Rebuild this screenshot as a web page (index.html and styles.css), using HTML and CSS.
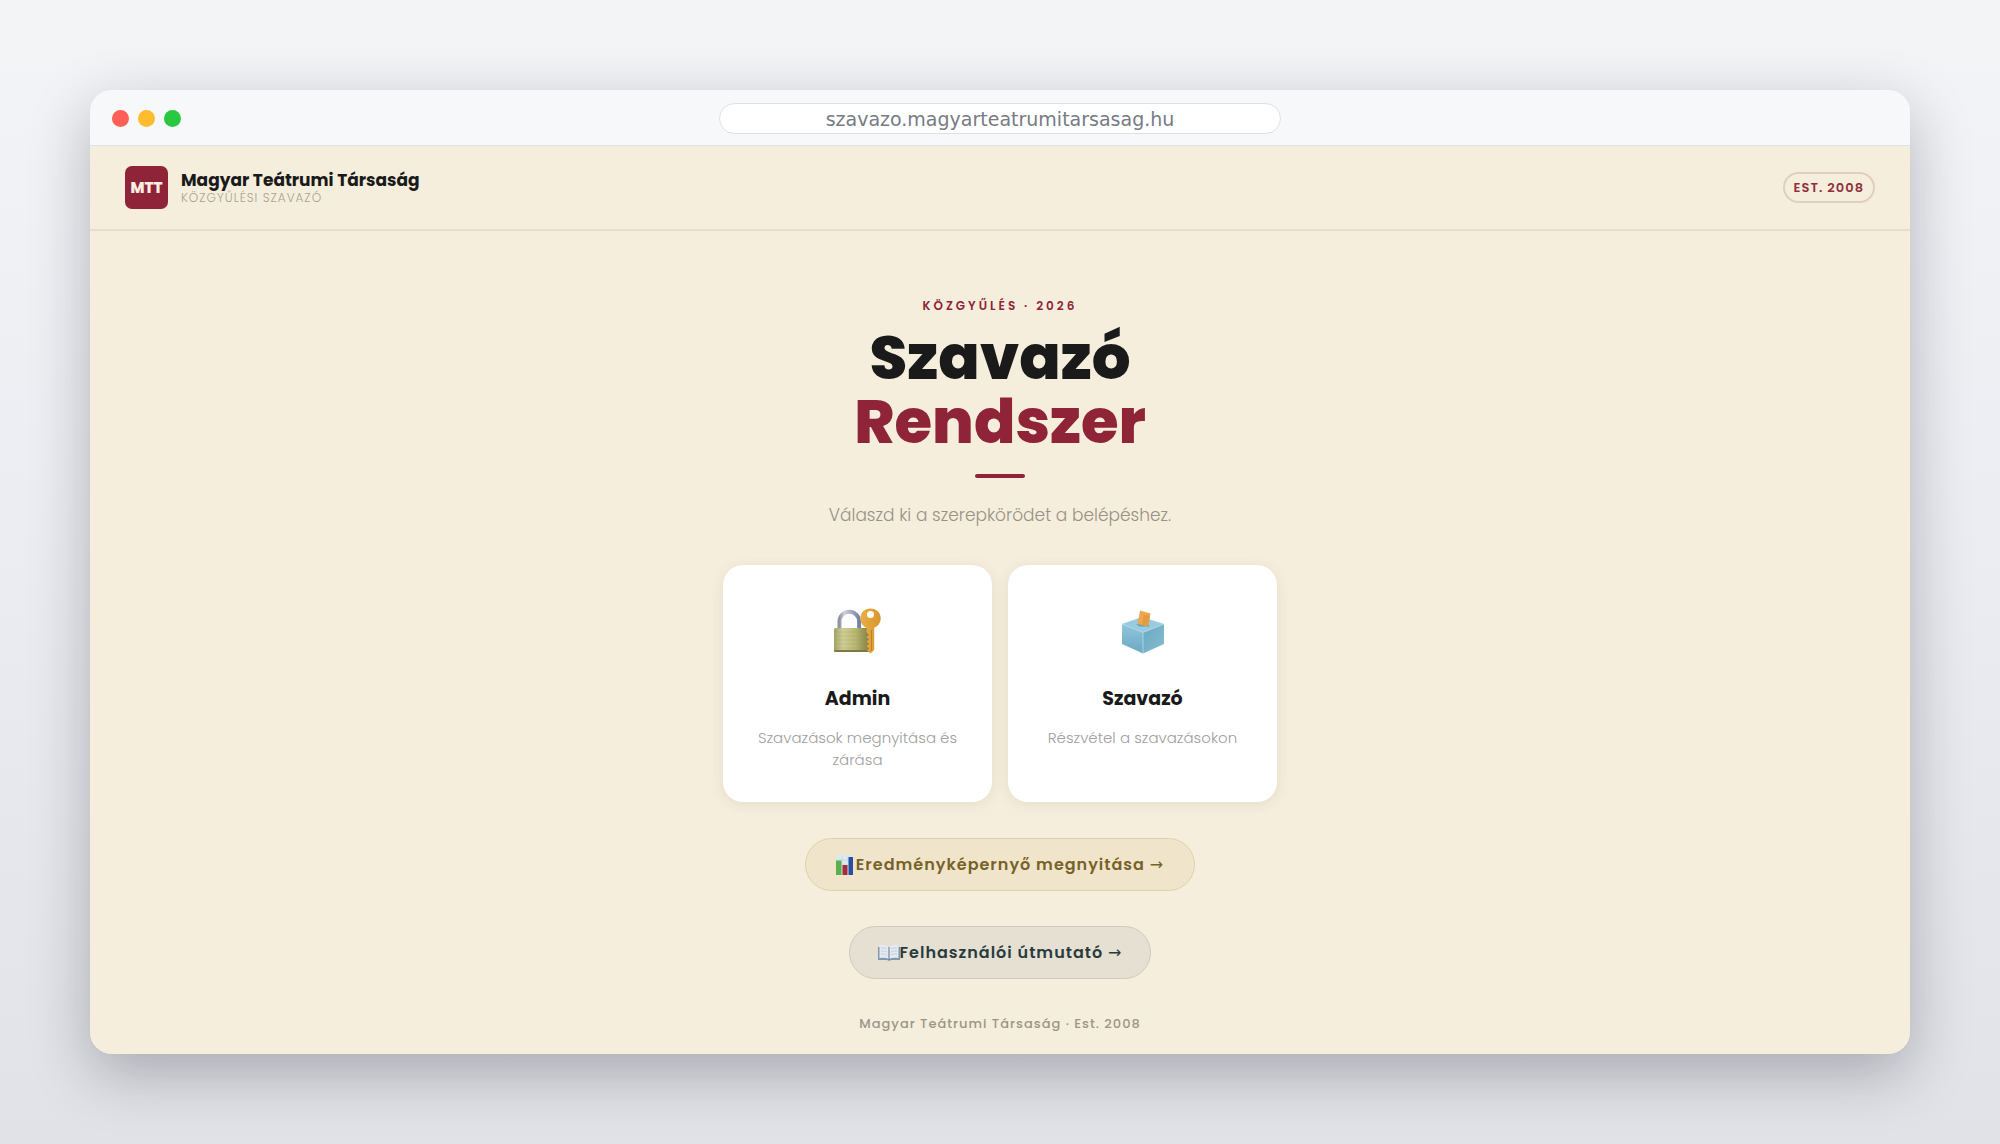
FILE: index.html
```html
<!DOCTYPE html>
<html lang="hu">
<head>
<meta charset="utf-8">
<meta name="viewport" content="width=device-width, initial-scale=1">
<title>Szavazó Rendszer</title>
<link rel="stylesheet" href="styles.css">
</head>
<body>
<div class="window">
  <div class="titlebar">
    <div class="lights"><span class="light light-red"></span><span class="light light-yellow"></span><span class="light light-green"></span></div>
    <input class="address" type="text" aria-label="Cím" value="szavazo.magyarteatrumitarsasag.hu" readonly>
  </div>
  <div class="page">
    <header class="header">
      <div class="brand">
        <span class="logo">MTT</span>
        <div>
          <div class="brand-name">Magyar Teátrumi Társaság</div>
          <div class="brand-sub">KÖZGYŰLÉSI SZAVAZÓ</div>
        </div>
      </div>
      <span class="badge">EST. 2008</span>
    </header>
    <main class="main">
      <p class="eyebrow">KÖZGYŰLÉS · 2026</p>
      <h1 class="title">Szavazó<br><span class="accent">Rendszer</span></h1>
      <div class="rule"></div>
      <p class="tagline">Válaszd ki a szerepkörödet a belépéshez.</p>
      <div class="cards">
        <a class="card" href="#admin">
          <svg class="card-icon" viewBox="0 0 48 48" aria-hidden="true">
            <defs>
              <linearGradient id="brass" x1="0" x2="1"><stop offset="0" stop-color="#a3a164"/><stop offset=".25" stop-color="#cfce97"/><stop offset=".6" stop-color="#b8b671"/><stop offset="1" stop-color="#7d7a40"/></linearGradient>
              <linearGradient id="steel" x1="0" x2="1"><stop offset="0" stop-color="#8f959f"/><stop offset=".25" stop-color="#cdd2dd"/><stop offset="1" stop-color="#7182a8"/></linearGradient>
              <linearGradient id="gold" x1="0" x2="1"><stop offset="0" stop-color="#eaae45"/><stop offset="1" stop-color="#d8962f"/></linearGradient>
            </defs>
            <path d="M5.500 22V14.500a9.800 9.800 0 0 1 19.600 0V22" fill="none" stroke="url(#steel)" stroke-width="4"/>
            <rect x="0" y="21" width="36" height="24" rx="1.500" fill="url(#brass)"/>
            <path d="M1 25h34M1 29h34M1 33h34M1 37h34M1 41h34" stroke="#9c9a50" stroke-width=".5" opacity=".5"/>
            <path d="M0 43h36v1q0 1-2 1H2q-2 0-2-1z" fill="#7c7b48"/>
            <path fill-rule="evenodd" d="M36.500 1.500c6 0 10.200 4.300 10.200 9.800 0 4.500-2.700 8-6.500 9.500V43L36.500 46.500 33 43.500l2-2-2.500-2.500 2.500-2-2.500-2.500 2.500-2-2.500-2.500 2.500-2-2.500-2.500V21c-3.500-1.700-6.200-5.200-6.200-9.700 0-5.500 4.200-9.800 10.200-9.800zm0 2.500a3.500 3.500 0 1 0 0 7 3.500 3.500 0 0 0 0-7z" fill="url(#gold)"/>
            <path d="M37.500 23v21" stroke="#c07f24" stroke-width="1"/>
          </svg>
          <h2 class="card-title">Admin</h2>
          <p class="card-text">Szavazások megnyitása és zárása</p>
        </a>
        <a class="card" href="#szavazo">
          <svg class="card-icon" viewBox="0 0 48 48" aria-hidden="true">
            <defs>
              <linearGradient id="boxl" x1="0" y1="0" x2="0" y2="1"><stop offset="0" stop-color="#8fc6dc"/><stop offset="1" stop-color="#6ba8c2"/></linearGradient>
              <linearGradient id="boxr" x1="0" y1="0" x2="1" y2="1"><stop offset="0" stop-color="#6aa8c2"/><stop offset="1" stop-color="#86bcd1"/></linearGradient>
            </defs>
            <path d="M3 17l21 8v21.500L3 37z" fill="url(#boxl)"/>
            <path d="M45 17l-21 8v21.500L45 37z" fill="url(#boxr)"/>
            <path d="M3 17l20-7 22 7-21 8.500z" fill="#98cbde"/>
            <path d="M3 17l21 8.500L45 17M24 26v20" fill="none" stroke="#b4dbe8" stroke-width=".8"/>
            <path d="M17 17l3.500 2.500h10l-1-2z" fill="#6f9fb1"/>
            <path d="M21 3.500l10.500 3-2.500 13L18.500 17z" fill="#eba650"/>
            <path d="M25 8l6 1-2 10-6-1.500z" fill="#e39a40"/>
          </svg>
          <h2 class="card-title">Szavazó</h2>
          <p class="card-text">Részvétel a szavazásokon</p>
        </a>
      </div>
      <a class="pill pill-gold" href="#eredmenyek">
        <svg class="pill-icon" viewBox="0 0 20 20" aria-hidden="true">
          <path d="M0 0h17v20H0z" fill="#dce9ee"/>
          <path d="M0 5h17M0 10h17M0 15h17M6 0v20M12 0v20" stroke="#c1d2dc" stroke-width=".6"/>
          <path d="M0 5.500h5.500V20H0z" fill="#5cb04c"/><path d="M6.500 10h5v10h-5z" fill="#a52b3e"/><path d="M12.500 2H17v18h-4.500z" fill="#2b4fa0"/>
        </svg><span>Eredményképernyő megnyitása <span class="arrow">→</span></span></a>
      <a class="pill pill-slate" href="#utmutato">
        <svg class="pill-icon pill-icon-wide" viewBox="0 0 22 20" aria-hidden="true">
          <path d="M0 4h22v13h-9l-2 1-2-1H0z" fill="#8397ad"/>
          <path d="M1.500 2Q7 1 11 4v12q-4-2-9.500-1zM20.500 2Q15 1 11 4v12q4-2 9.500-1z" fill="#e5eaf2"/>
          <path d="M11 4v13" stroke="#647083" stroke-width="1"/>
          <path d="M3 5q4-.5 6 1M3 8q4-.5 6 1M3 11q4-.5 6 1M19 5q-4-.5-6 1M19 8q-4-.5-6 1M19 11q-4-.5-6 1" fill="none" stroke="#bcc6d6" stroke-width=".8"/>
        </svg><span>Felhasználói útmutató <span class="arrow">→</span></span></a>
      <footer class="footer">Magyar Teátrumi Társaság · Est. 2008</footer>
    </main>
  </div>
</div>
</body>
</html>
```
FILE: styles.css
```css
* { box-sizing: border-box; }

body {
  margin: 0;
  min-height: 100vh;
  padding: 90px;
  background: linear-gradient(#f3f4f6, #eceef3 40%, #e1e2e7);
  font-family: Poppins, "Liberation Sans", sans-serif;
  color: #1a1a1a;
}

h1, h2, p { margin: 0; }
a { color: inherit; text-decoration: none; }

.window {
  border-radius: 22px;
  overflow: hidden;
  box-shadow: 0 20px 60px rgba(20, 20, 35, .28);
}

.titlebar {
  display: grid;
  grid-template-columns: 1fr 562px 1fr;
  align-items: center;
  height: 56px;
  padding: 2px 22px 0;
  background: #f7f8fa;
  border-bottom: 1px solid #dde0e4;
}
.lights { display: flex; gap: 9px; }
.light { width: 17px; height: 17px; border-radius: 50%; }
.light-red { background: #ff5f57; }
.light-yellow { background: #febc2e; }
.light-green { background: #28c840; }
.address {
  width: 100%;
  height: 31px;
  padding: 0 16px;
  border: 1px solid #dde0e4;
  border-radius: 16px;
  background: #fff;
  color: #777b83;
  font: 19px "DejaVu Sans", sans-serif;
  text-align: center;
}

.page { background: #f5eedc; }
.header {
  display: flex;
  justify-content: space-between;
  align-items: center;
  padding: 20px 35px;
  border-bottom: 2px solid #e6decb;
}
.brand { display: flex; align-items: center; gap: 13px; }
.logo {
  width: 43px;
  height: 43px;
  border-radius: 7px;
  background: #8f2438;
  color: #f8efe2;
  font-size: 15px;
  font-weight: 800;
  line-height: 44px;
  text-align: center;
}
.brand-name { font-size: 17px; font-weight: 700; line-height: 20px; }
.brand-sub { color: #aaa393; font-size: 12px; font-weight: 300; line-height: 16px; letter-spacing: 1px; }
.badge {
  padding: 0 9px;
  border: 2px solid #e0cfbd;
  border-radius: 16px;
  color: #8f2f3c;
  font-size: 13px;
  font-weight: 600;
  line-height: 27px;
  letter-spacing: 1px;
}

.main {
  display: flex;
  flex-direction: column;
  align-items: center;
  padding: 65px 24px 20px;
  text-align: center;
}
.eyebrow { color: #8f2438; font-size: 12px; font-weight: 600; line-height: 20px; letter-spacing: 3px; }
.title { margin-top: 10px; font-size: 61px; font-weight: 800; line-height: 64px; }
.accent { color: #8f2438; }
.rule { width: 50px; height: 4px; margin-top: 20px; border-radius: 2px; background: #8f2438; }
.tagline { margin-top: 23px; color: #989286; font-size: 17px; font-weight: 300; line-height: 28px; }

.cards {
  display: grid;
  grid-template-columns: 1fr 1fr;
  gap: 16px;
  width: 100%;
  max-width: 554px;
  margin: 36px 0;
}
.card {
  padding: 42px 28px 31px;
  border-radius: 20px;
  background: #fff;
  box-shadow: 0 2px 14px rgba(80, 60, 20, .09);
}
.card-icon { display: block; width: 48px; height: 48px; margin: 0 auto 30px; }
.card-title { font-size: 19px; font-weight: 700; line-height: 28px; }
.card-text { margin-top: 14px; color: #a0a0a0; font-size: 15px; font-weight: 300; line-height: 22px; }

.pill {
  display: flex;
  align-items: center;
  height: 53px;
  padding: 0 30px;
  margin-bottom: 35px;
  border: 1px solid;
  border-radius: 27px;
  font-size: 16px;
  font-weight: 600;
  line-height: 24px;
  letter-spacing: 1px;
}
.pill-icon { width: 20px; height: 20px; }
.pill-icon-wide { width: 22px; }
.arrow { font-family: "DejaVu Sans", sans-serif; font-weight: 400; }
.pill-gold { border-color: #dfd1a9; background: #f0e5ca; color: #77622a; }
.pill-slate { padding: 0 28px; border-color: #cfcabd; background: #e5e0d1; color: #293b3f; }
.footer { color: #9c9588; font-size: 13px; font-weight: 500; line-height: 20px; letter-spacing: 1px; }
```
